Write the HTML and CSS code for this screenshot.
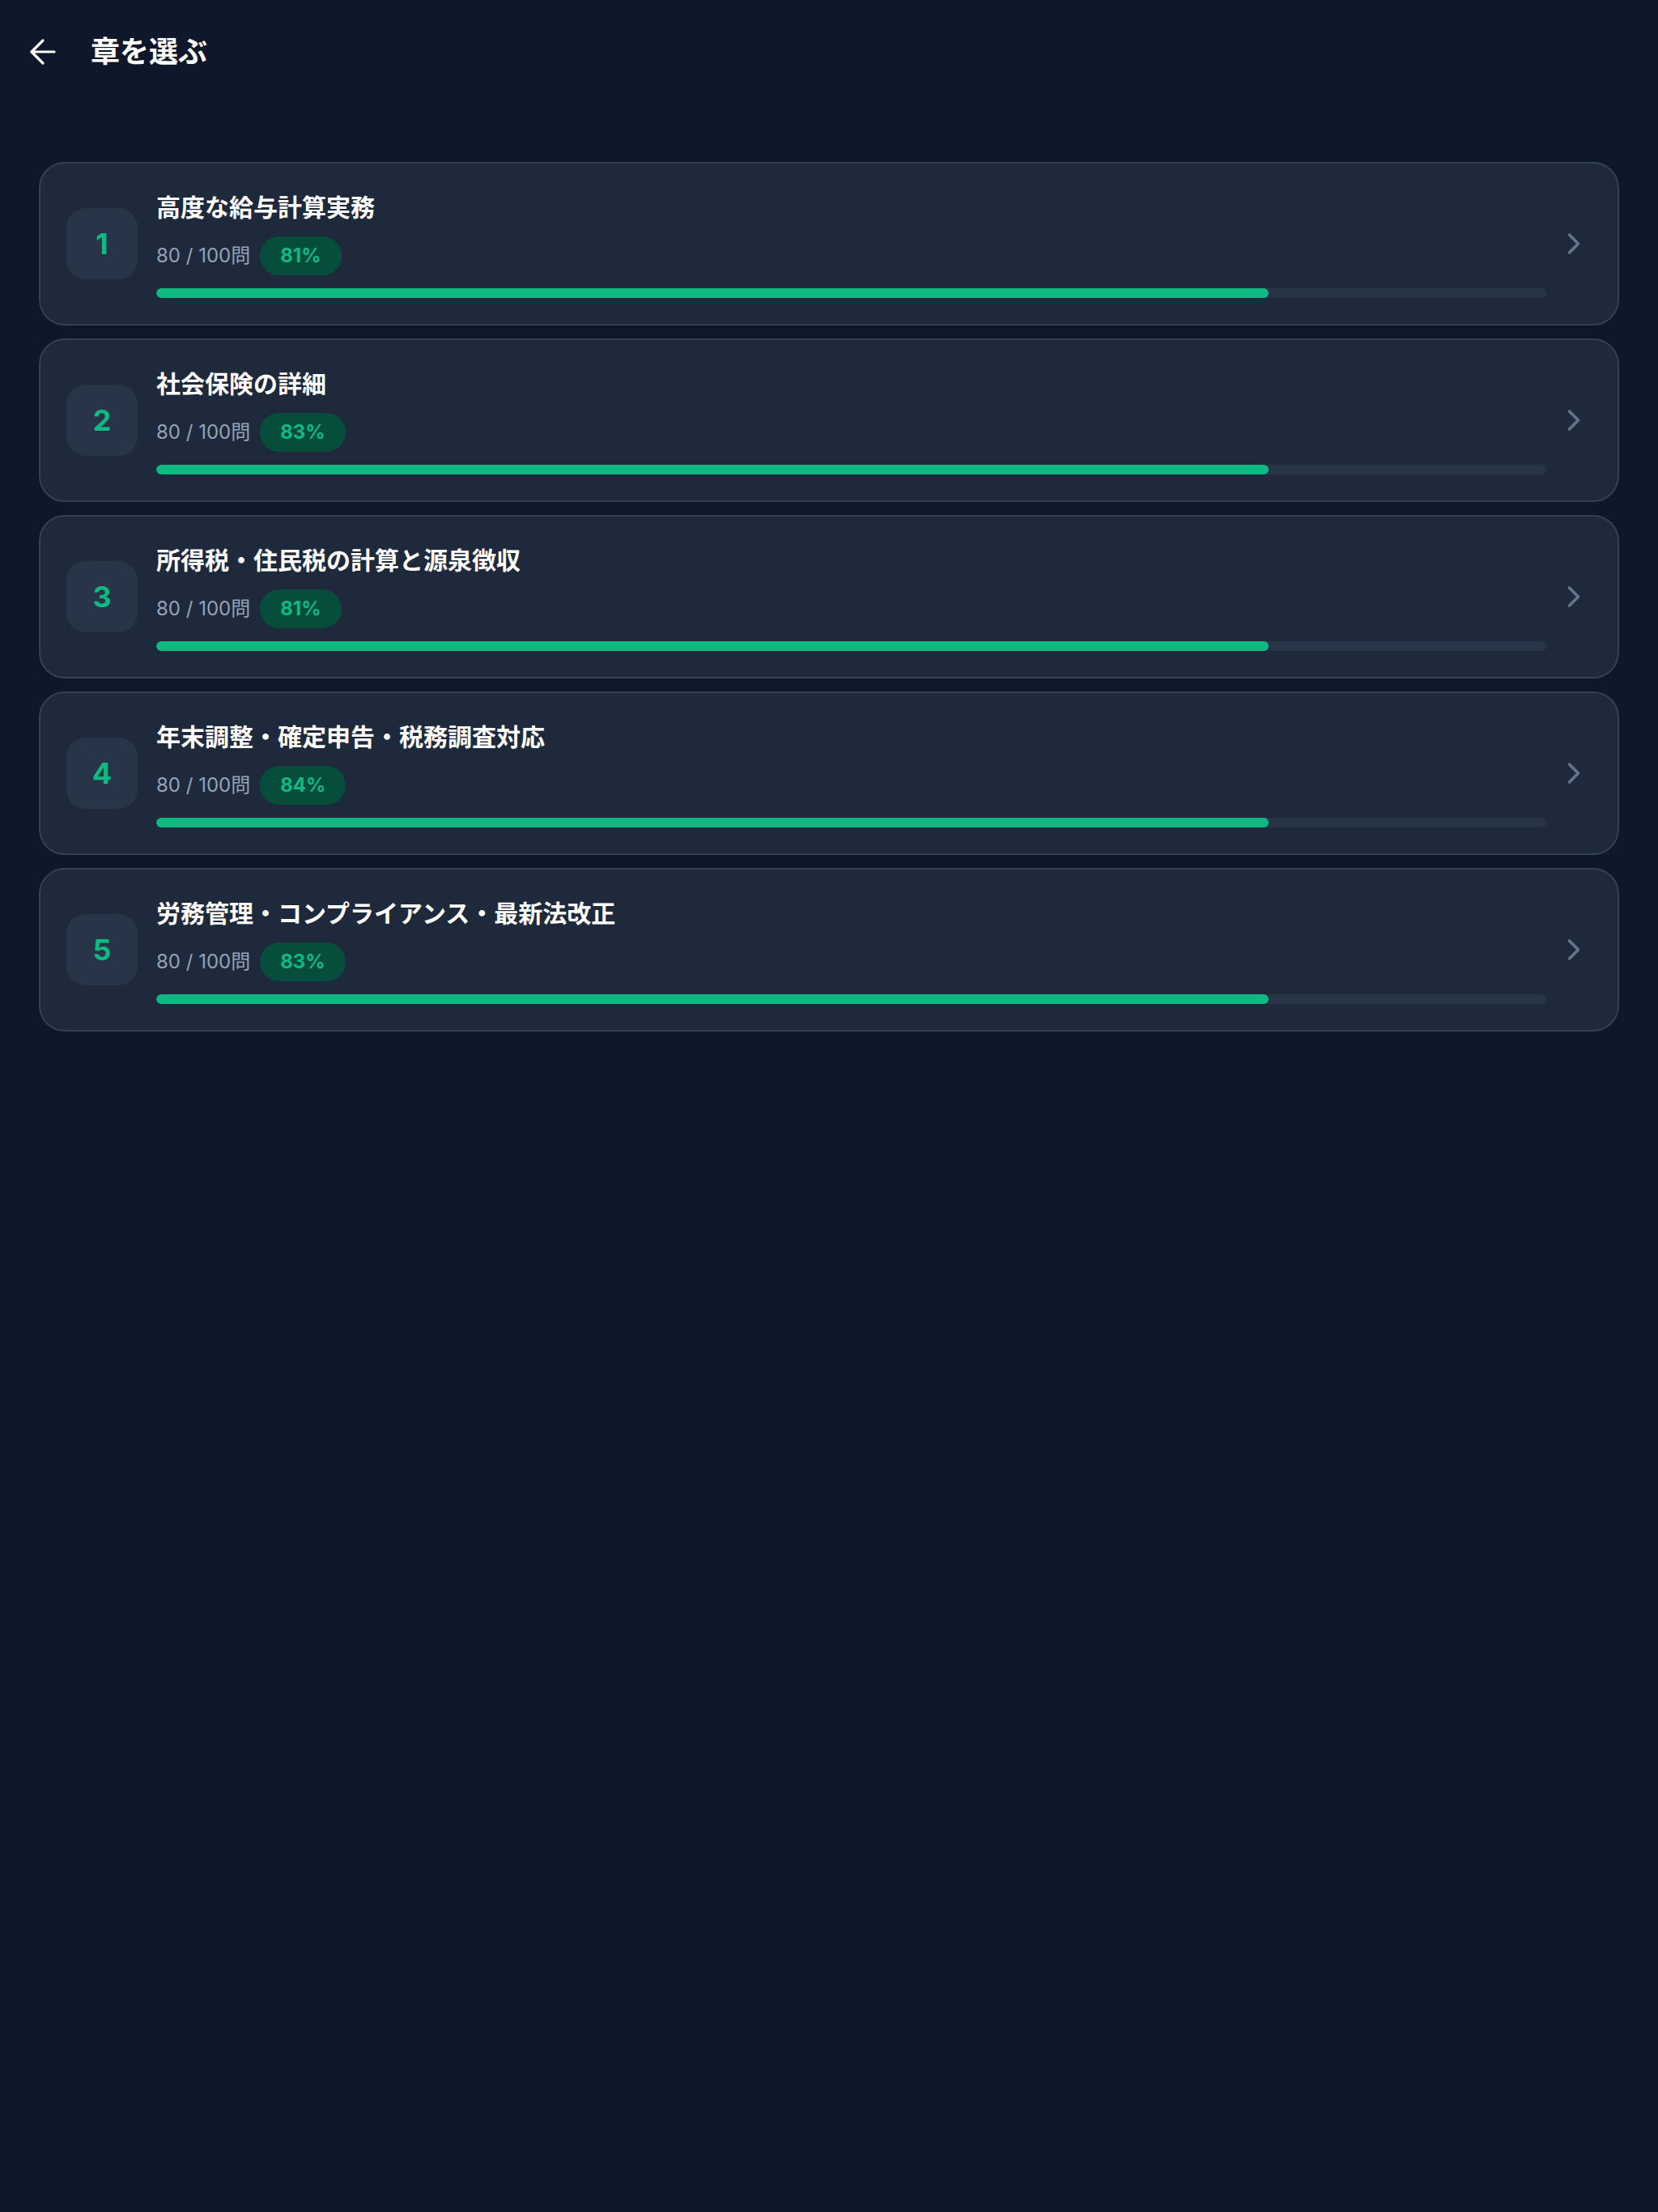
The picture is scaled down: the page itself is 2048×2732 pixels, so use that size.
FILE: index.html
```html
<!DOCTYPE html>
<html lang="ja">
<head>
<meta charset="utf-8">
<title>章を選ぶ</title>
<link rel="stylesheet" href="styles.css">
</head>
<body>
<div class="app">
  <header class="header">
    <button class="back" aria-label="戻る">
      <svg viewBox="0 0 24 24" width="48" height="48" fill="none" stroke="currentColor" stroke-width="1.6" stroke-linecap="round" stroke-linejoin="round"><path d="m12 19-7-7 7-7"/><path d="M19 12H5"/></svg>
    </button>
    <h1 class="title">章を選ぶ</h1>
  </header>
  <main class="list">
    <div class="card">
      <div class="num">1</div>
      <div class="content">
        <div class="card-title">高度な給与計算実務</div>
        <div class="meta"><span class="count">80 / 100問</span><span class="badge">81%</span></div>
        <div class="track"><div class="fill" style="width:80%"></div></div>
      </div>
      <svg class="chev" viewBox="0 0 24 24" fill="none" stroke="currentColor" stroke-width="2" stroke-linecap="round" stroke-linejoin="round"><path d="m9 18 6-6-6-6"/></svg>
    </div>
    <div class="card">
      <div class="num">2</div>
      <div class="content">
        <div class="card-title">社会保険の詳細</div>
        <div class="meta"><span class="count">80 / 100問</span><span class="badge">83%</span></div>
        <div class="track"><div class="fill" style="width:80%"></div></div>
      </div>
      <svg class="chev" viewBox="0 0 24 24" fill="none" stroke="currentColor" stroke-width="2" stroke-linecap="round" stroke-linejoin="round"><path d="m9 18 6-6-6-6"/></svg>
    </div>
    <div class="card">
      <div class="num">3</div>
      <div class="content">
        <div class="card-title">所得税・住民税の計算と源泉徴収</div>
        <div class="meta"><span class="count">80 / 100問</span><span class="badge">81%</span></div>
        <div class="track"><div class="fill" style="width:80%"></div></div>
      </div>
      <svg class="chev" viewBox="0 0 24 24" fill="none" stroke="currentColor" stroke-width="2" stroke-linecap="round" stroke-linejoin="round"><path d="m9 18 6-6-6-6"/></svg>
    </div>
    <div class="card">
      <div class="num">4</div>
      <div class="content">
        <div class="card-title">年末調整・確定申告・税務調査対応</div>
        <div class="meta"><span class="count">80 / 100問</span><span class="badge">84%</span></div>
        <div class="track"><div class="fill" style="width:80%"></div></div>
      </div>
      <svg class="chev" viewBox="0 0 24 24" fill="none" stroke="currentColor" stroke-width="2" stroke-linecap="round" stroke-linejoin="round"><path d="m9 18 6-6-6-6"/></svg>
    </div>
    <div class="card">
      <div class="num">5</div>
      <div class="content">
        <div class="card-title">労務管理・コンプライアンス・最新法改正</div>
        <div class="meta"><span class="count">80 / 100問</span><span class="badge">83%</span></div>
        <div class="track"><div class="fill" style="width:80%"></div></div>
      </div>
      <svg class="chev" viewBox="0 0 24 24" fill="none" stroke="currentColor" stroke-width="2" stroke-linecap="round" stroke-linejoin="round"><path d="m9 18 6-6-6-6"/></svg>
    </div>
  </main>
</div>
</body>
</html>
```

FILE: styles.css
```css
* { box-sizing: border-box; }
html, body {
  margin: 0;
  padding: 0;
  background: #0f172a;
  min-height: 100%;
}
body {
  font-family: "Inter", "Noto Sans CJK JP", sans-serif;
  color: #f8fafc;
  min-height: 2732px;
}
.header {
  height: 128px;
  display: flex;
  align-items: center;
  padding-left: 29px;
}
.back {
  background: none;
  border: 0;
  padding: 0;
  margin: 0;
  width: 48px;
  height: 48px;
  color: #ffffff;
  display: flex;
}
.title {
  margin: 0 0 0 35px;
  font-size: 36px;
  font-weight: 700;
  line-height: 48px;
  color: #ffffff;
}
.list {
  padding: 72px 48px 0;
  display: flex;
  flex-direction: column;
  gap: 16px;
}
.card {
  display: flex;
  align-items: center;
  padding: 32px;
  background: #1e293b;
  border: 2px solid #334155;
  border-radius: 32px;
}
.num {
  flex: none;
  width: 88px;
  height: 88px;
  border-radius: 24px;
  background: #283548;
  color: #10b981;
  font-size: 36px;
  font-weight: 700;
  display: flex;
  align-items: center;
  justify-content: center;
  margin-right: 23px;
}
.content {
  flex: 1;
  min-width: 0;
}
.card-title {
  font-size: 30px;
  font-weight: 700;
  line-height: 44px;
  color: #ffffff;
}
.meta {
  margin-top: 14px;
  display: flex;
  align-items: center;
  gap: 12px;
  height: 48px;
}
.count {
  font-size: 24px;
  line-height: 32px;
  color: #94a3b8;
}
.badge {
  height: 48px;
  line-height: 48px;
  padding: 0 25px;
  border-radius: 24px;
  background: #064e3b;
  color: #10b981;
  font-size: 24px;
  font-weight: 700;
}
.track {
  margin-top: 16px;
  height: 12px;
  border-radius: 6px;
  background: #283548;
  overflow: hidden;
}
.fill {
  height: 100%;
  border-radius: 6px;
  background: #10b981;
}
.chev {
  flex: none;
  width: 44px;
  height: 44px;
  margin-left: 12px;
  color: #64748b;
}
```
